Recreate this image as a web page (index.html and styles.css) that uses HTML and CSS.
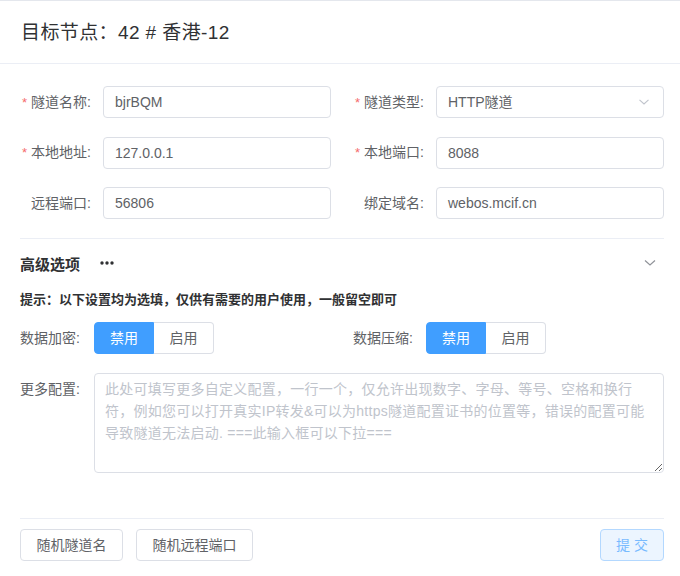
FILE: index.html
```html
<!DOCTYPE html>
<html lang="zh-CN">
<head>
<meta charset="utf-8">
<title>目标节点</title>
<link rel="stylesheet" href="styles.css">
</head>
<body>
<div class="dialog">
  <div class="header"><span class="title">目标节点：42 # 香港-12</span></div>
  <div class="body">
    <div class="grid">
      <div class="item">
        <label class="label"><span class="req">*</span>隧道名称:</label>
        <div class="input">bjrBQM</div>
      </div>
      <div class="item">
        <label class="label"><span class="req">*</span>隧道类型:</label>
        <div class="input select">HTTP隧道
          <svg class="chev" width="10" height="6" viewBox="0 0 10 6"><polyline points="0.5,0.8 5,5 9.5,0.8" fill="none" stroke="#c0c4cc" stroke-width="1.1"/></svg>
        </div>
      </div>
      <div class="item">
        <label class="label"><span class="req">*</span>本地地址:</label>
        <div class="input">127.0.0.1</div>
      </div>
      <div class="item">
        <label class="label"><span class="req">*</span>本地端口:</label>
        <div class="input">8088</div>
      </div>
      <div class="item">
        <label class="label">远程端口:</label>
        <div class="input">56806</div>
      </div>
      <div class="item">
        <label class="label">绑定域名:</label>
        <div class="input">webos.mcif.cn</div>
      </div>
    </div>

    <div class="collapse">
      <div class="collapse-head">
        <span class="ctitle">高级选项</span>
        <svg class="dots" width="14" height="4" viewBox="0 0 14 4"><circle cx="2" cy="2" r="1.7" fill="#303133"/><circle cx="7" cy="2" r="1.7" fill="#303133"/><circle cx="12" cy="2" r="1.7" fill="#303133"/></svg>
        <svg class="cchev" width="12" height="8" viewBox="0 0 12 8"><polyline points="1,1.5 6,6 11,1.5" fill="none" stroke="#909399" stroke-width="1.2"/></svg>
      </div>
      <div class="hint">提示：以下设置均为选填，仅供有需要的用户使用，一般留空即可</div>
      <div class="grid switches">
        <div class="sitem">
          <span class="slabel">数据加密:</span>
          <div class="group"><span class="gbtn active">禁用</span><span class="gbtn">启用</span></div>
        </div>
        <div class="sitem">
          <span class="slabel">数据压缩:</span>
          <div class="group"><span class="gbtn active">禁用</span><span class="gbtn">启用</span></div>
        </div>
      </div>
      <div class="more">
        <span class="slabel mlabel">更多配置:</span>
        <textarea class="textarea" placeholder="此处可填写更多自定义配置，一行一个，仅允许出现数字、字母、等号、空格和换行&#10;符，例如您可以打开真实IP转发&amp;可以为https隧道配置证书的位置等，错误的配置可能&#10;导致隧道无法启动. ===此输入框可以下拉==="></textarea>
      </div>
    </div>
  </div>
  <div class="footer">
    <div class="left">
      <span class="btn">随机隧道名</span>
      <span class="btn">随机远程端口</span>
    </div>
    <span class="btn submit">提 交</span>
  </div>
</div>
</body>
</html>
```

FILE: styles.css
```css
* { box-sizing: border-box; }
html, body { margin: 0; padding: 0; background: #fff; }
body {
  font-family: "Liberation Sans", "Noto Sans CJK SC", sans-serif;
  font-size: 14px;
  color: #606266;
}
.dialog { width: 680px; height: 576px; }
.header {
  border-top: 1px solid #e4e7ed;
  border-bottom: 1px solid #ebeef5;
  height: 64px;
  padding: 0 20px 0 21px;
  display: flex;
  align-items: center;
}
.title { font-size: 19px; color: #303133; line-height: 24px; padding-top: 2px; letter-spacing: 0.4px; }
.body { padding: 22px 16px 0 20px; }
.grid {
  display: grid;
  grid-template-columns: 1fr 1fr;
  column-gap: 22px;
  row-gap: 18.5px;
}
.item { display: flex; align-items: center; height: 32px; }
.label {
  width: 83px;
  flex: none;
  text-align: right;
  padding-right: 12px;
  line-height: 32px;
  color: #606266;
}
.req { color: #f56c6c; margin-right: 4px; font-size: 13px; }
.input {
  flex: 1;
  height: 32px;
  border: 1px solid #dcdfe6;
  border-radius: 4px;
  padding: 0 11px;
  line-height: 30px;
  color: #606266;
  position: relative;
}
.chev { position: absolute; right: 14px; top: 12px; }
.collapse { border-top: 1px solid #ebeef5; margin-top: 19px; }
.collapse-head {
  height: 48px;
  display: flex;
  align-items: center;
  font-weight: bold;
  color: #303133;
}
.ctitle { font-size: 15px; }
.dots { margin-left: 20px; }
.cchev { margin-left: auto; margin-right: 8px; }
.hint {
  font-size: 13px;
  font-weight: bold;
  color: #303133;
  line-height: 20px;
  margin-top: 3px;
}
.switches { margin-top: 12px; }
.sitem { display: flex; align-items: center; height: 32px; }
.slabel { width: 74px; flex: none; line-height: 32px; color: #606266; }
.sitem:nth-child(2) .slabel { width: 73px; }
.group { display: flex; }
.gbtn {
  width: 60px;
  height: 32px;
  line-height: 30px;
  text-align: center;
  border: 1px solid #dcdfe6;
  color: #606266;
  background: #fff;
}
.gbtn:first-child { border-radius: 4px 0 0 4px; }
.gbtn:last-child { border-radius: 0 4px 4px 0; border-left: 0; }
.gbtn.active { background: #409eff; border-color: #409eff; color: #fff; }
.more { display: flex; align-items: flex-start; margin-top: 19px; }
.mlabel { width: 74px; }
.textarea {
  flex: 1;
  height: 100px;
  border: 1px solid #dcdfe6;
  border-radius: 4px;
  padding: 4px 12px 5px 10px;
  font-family: "Liberation Sans", "Noto Sans CJK SC", sans-serif;
  font-size: 14px;
  line-height: 22px;
  letter-spacing: 0.25px;
  color: #606266;
  resize: vertical;
  outline: none;
  margin: 0;
}
.textarea::placeholder { color: #c0c4cc; }
.footer {
  margin: 45px 16px 0 20px;
  border-top: 1px solid #ebeef5;
  padding-top: 10px;
  display: flex;
  justify-content: space-between;
}
.left { display: flex; gap: 13px; }
.btn {
  height: 32px;
  line-height: 30px;
  border: 1px solid #dcdfe6;
  border-radius: 4px;
  padding: 0 15.5px;
  color: #606266;
  background: #fff;
}
.submit {
  width: 64px;
  text-align: center;
  padding: 0;
  background: #ecf5ff;
  border-color: #b3d8ff;
  color: #79bbff;
}
```
